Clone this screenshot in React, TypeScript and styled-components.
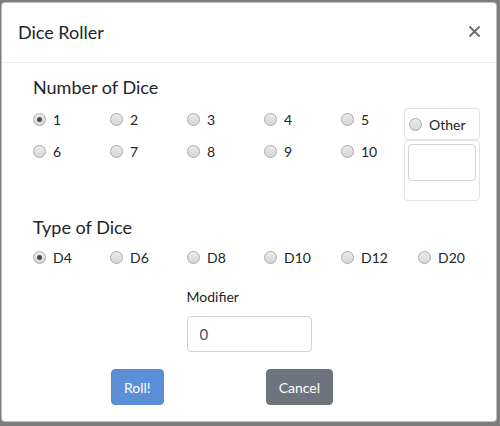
import React, { useState } from "react";
import styled, { createGlobalStyle } from "styled-components";

const Global = createGlobalStyle`
  html, body { margin: 0; padding: 0; }
  body {
    background: #7d7d7d;
    font-family: Lato, "Open Sans", "Liberation Sans", sans-serif;
    color: #212529;
    width: 500px;
    height: 426px;
    overflow: hidden;
  }
  * { box-sizing: border-box; }
`;

const Modal = styled.div`
  margin: 2px 0 0 1px;
  width: 496px;
  background: #fff;
  border: 1px solid rgba(0, 0, 0, 0.25);
  border-radius: 4px;
`;

const Header = styled.div`
  display: flex;
  align-items: center;
  justify-content: space-between;
  padding: 16px;
  border-bottom: 1px solid #e9ecef;
`;

const Title = styled.h5`
  margin: 0;
  font-size: 18px;
  font-weight: 400;
  line-height: 27px;
`;

const Close = styled.button`
  border: 0;
  background: transparent;
  padding: 0;
  width: 12px;
  height: 12px;
  display: flex;
  align-items: center;
  justify-content: center;
  cursor: pointer;
  margin-top: -3px;
`;

const Body = styled.div`
  padding: 11px 31px 16px;
`;

const Heading = styled.h4`
  margin: 0;
  font-size: 18px;
  font-weight: 400;
  line-height: 27px;
`;

const NumberSection = styled.div`
  display: flex;
  align-items: flex-start;
  margin-top: 2px;
`;

const Grid = styled.div<{ $cols: string }>`
  display: grid;
  grid-template-columns: ${(p) => p.$cols};
  grid-auto-rows: 32px;
`;

const Option = styled.label`
  display: flex;
  align-items: center;
  gap: 7px;
  font-size: 14px;
  line-height: 21px;
  cursor: pointer;
`;

const Radio = styled.input.attrs({ type: "radio" })`
  appearance: none;
  -webkit-appearance: none;
  margin: 0;
  width: 13px;
  height: 13px;
  border-radius: 50%;
  border: 1px solid #a9a9a9;
  background: linear-gradient(#ececec, #d6d6d6);
  display: grid;
  place-items: center;
  flex: none;
  &:checked::after {
    content: "";
    width: 5px;
    height: 5px;
    border-radius: 50%;
    background: #4a4a4a;
  }
`;

const OtherBox = styled.div`
  width: 76px;
  margin-top: 5px;
  display: flex;
  flex-direction: column;
`;

const OtherTop = styled.div`
  height: 32px;
  border: 1px solid #e3e3e3;
  border-radius: 4px;
  padding-left: 4px;
  display: flex;
  align-items: center;
`;

const OtherBottom = styled.div`
  height: 61px;
  border: 1px solid #e3e3e3;
  border-radius: 4px;
  padding: 3px 3px 0 3px;
`;

const SmallInput = styled.input`
  width: 68px;
  height: 37px;
  border: 1px solid #ced4da;
  border-radius: 4px;
  padding: 0 8px;
  font: inherit;
  font-size: 14px;
`;

const TypeHeading = styled(Heading)`
  margin-top: 13px;
`;

const ModifierGroup = styled.div`
  width: 125px;
  margin: 13px auto 0;
  display: flex;
  flex-direction: column;
`;

const FieldLabel = styled.label`
  font-size: 14px;
  line-height: 21px;
  margin-bottom: 9px;
`;

const TextInput = styled.input`
  width: 125px;
  height: 36px;
  border: 1px solid #ced4da;
  border-radius: 4px;
  padding: 0 12px;
  font-family: Lato, "Liberation Sans", sans-serif;
  font-size: 15px;
  color: #495057;
`;

const Footer = styled.div`
  display: flex;
  gap: 102px;
  margin-top: 17px;
  padding-left: 78px;
`;

const Button = styled.button<{ $variant: "primary" | "secondary" }>`
  height: 36px;
  padding: 0 12px;
  border-radius: 4px;
  font-family: Lato, "Liberation Sans", sans-serif;
  font-size: 14px;
  color: #fff;
  cursor: pointer;
  background: ${(p) => (p.$variant === "primary" ? "#5d8fd9" : "#6c757d")};
  border: 1px solid ${(p) => (p.$variant === "primary" ? "#588ad4" : "#6c757d")};
`;

const counts = ["1", "2", "3", "4", "5", "6", "7", "8", "9", "10"];
const types = ["D4", "D6", "D8", "D10", "D12", "D20"];

export default function App() {
  const [count, setCount] = useState("1");
  const [type, setType] = useState("D4");
  const [mod, setMod] = useState("0");
  const [other, setOther] = useState("");

  return (
    <>
      <Global />
      <Modal>
        <Header>
          <Title>Dice Roller</Title>
          <Close aria-label="Close">
            <svg width="11" height="11" viewBox="0 0 11 11">
              <path d="M1 1 L10 10 M10 1 L1 10" stroke="#6a6a6a" strokeWidth="1.8" strokeLinecap="round" />
            </svg>
          </Close>
        </Header>
        <Body>
          <Heading>Number of Dice</Heading>
          <NumberSection>
            <Grid $cols="77px 77px 77px 77px 63px">
              {counts.map((c) => (
                <Option key={c}>
                  <Radio name="count" checked={count === c} onChange={() => setCount(c)} />
                  {c}
                </Option>
              ))}
            </Grid>
            <OtherBox>
              <OtherTop>
                <Option>
                  <Radio name="count" checked={count === "other"} onChange={() => setCount("other")} />
                  Other
                </Option>
              </OtherTop>
              <OtherBottom>
                <SmallInput value={other} onChange={(e) => setOther(e.target.value)} />
              </OtherBottom>
            </OtherBox>
          </NumberSection>
          <TypeHeading>Type of Dice</TypeHeading>
          <Grid $cols="repeat(6, 77px)">
            {types.map((t) => (
              <Option key={t}>
                <Radio name="type" checked={type === t} onChange={() => setType(t)} />
                {t}
              </Option>
            ))}
          </Grid>
          <ModifierGroup>
            <FieldLabel htmlFor="mod">Modifier</FieldLabel>
            <TextInput id="mod" value={mod} onChange={(e) => setMod(e.target.value)} />
          </ModifierGroup>
          <Footer>
            <Button $variant="primary">Roll!</Button>
            <Button $variant="secondary">Cancel</Button>
          </Footer>
        </Body>
      </Modal>
    </>
  );
}
